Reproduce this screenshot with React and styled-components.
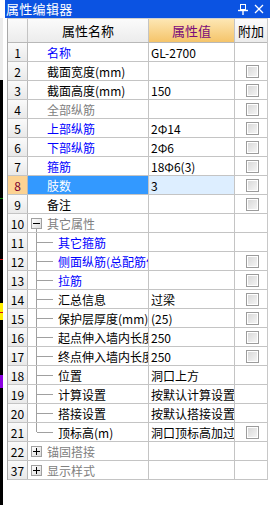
import React from "react";
import styled, { createGlobalStyle, css } from "styled-components";

const GlobalStyle = createGlobalStyle`
  html, body {
    margin: 0;
    padding: 0;
    background: #fff;
  }
  * {
    box-sizing: border-box;
  }
`;

const FONT = `"Noto Sans CJK SC", "Liberation Sans", sans-serif`;

const Page = styled.div`
  display: flex;
  width: 270px;
  height: 505px;
  overflow: hidden;
  font-family: ${FONT};
  font-size: 12px;
`;

// the app behind the docked panel shows through on the left
const BackStrip = styled.div`
  width: 3px;
  flex: none;
  background: linear-gradient(
    to bottom,
    #fff 0 18px,
    #ececec 18px 80px,
    #000 80px 198px,
    #0a8a0a 198px 199px,
    #000 199px 259px,
    #d01010 259px 260px,
    #000 260px 303px,
    #ffee00 303px 312px,
    #d01010 312px 313px,
    #ffee00 313px 320px,
    #000 320px 375px,
    #8a00e0 375px 388px,
    #000 388px
  );
`;

const Panel = styled.div`
  flex: 1;
  display: flex;
  flex-direction: column;
  background: #fff;
`;

const TitleBar = styled.div`
  height: 18px;
  margin-left: 2px;
  display: flex;
  align-items: center;
  background: #0b53e2;
  color: #fff;
  padding-left: 1px;
  padding-right: 6px;
`;

const Title = styled.span`
  flex: 1;
  font-size: 13px;
  line-height: 18px;
  letter-spacing: 0.3px;
`;

const TitleButton = styled.span`
  width: 11px;
  height: 11px;
  margin-left: 5px;
  display: flex;
  align-items: center;
  justify-content: center;
`;

const Grid = styled.div`
  margin-left: 4px;
  width: 261px;
  border-left: 1px solid #a8a8a8;
  border-right: 1px solid #c8c8c8;
  border-top: 1px solid #d0d0d0;
`;

const Row = styled.div`
  display: grid;
  grid-template-columns: 20px 121px 86px 32px;
  height: ${(p) => (p.$header ? 24 : 19)}px;
  border-bottom: 1px solid ${(p) => (p.$header ? "#b8b8b8" : "#c4c4c4")};
`;

const HeadCell = styled.div`
  display: flex;
  align-items: center;
  justify-content: center;
  border-right: 1px solid #c4c4c4;
  background: linear-gradient(to bottom, #fbfbfb, #ececec);
  color: #000;
  font-size: 13px;
  white-space: nowrap;
  overflow: hidden;
  ${(p) =>
    p.$accent &&
    css`
      background: linear-gradient(to bottom, #fde7b4, #f5c46a);
      color: #7a0a7a;
    `}
  &:last-child {
    border-right: none;
  }
`;

const NumCell = styled.div`
  display: flex;
  align-items: center;
  justify-content: center;
  border-right: 1px solid #b8b8b8;
  background: ${(p) =>
    p.$active
      ? "#fcd393"
      : "linear-gradient(to bottom, #fafafa, #e9e9e9)"};
  color: ${(p) => (p.$active ? "#7a0030" : "#000")};
  font-size: 12px;
`;

const NameCell = styled.div`
  display: flex;
  align-items: center;
  min-width: 0;
  border-right: 1px solid #c4c4c4;
  padding-left: ${(p) => (p.$child ? 0 : p.$group ? 3 : 19)}px;
  overflow: hidden;
  background: ${(p) => (p.$selected ? "#3399ff" : "transparent")};
  color: ${(p) =>
    p.$selected
      ? "#fff"
      : p.$tone === "blue"
      ? "#0000ff"
      : p.$tone === "gray"
      ? "#808080"
      : "#000"};
`;

const Label = styled.span`
  flex: 1;
  min-width: 0;
  white-space: nowrap;
  overflow: hidden;
  text-overflow: clip;
`;

const ValueCell = styled.div`
  display: flex;
  align-items: center;
  min-width: 0;
  border-right: 1px solid #c4c4c4;
  padding-left: 2px;
  overflow: hidden;
  background: ${(p) => (p.$selected ? "#ddeeff" : "transparent")};
  color: #000;
`;

const ExtraCell = styled.div`
  display: flex;
  align-items: center;
  justify-content: center;
  padding-left: 2px;
`;

const Check = styled.span`
  display: block;
  width: 13px;
  height: 13px;
  border: 1px solid #9c9c9c;
  box-shadow: inset 0 0 0 1px #fff;
  background: linear-gradient(135deg, #d6d6d6, #f7f7f7);
`;

const Expander = styled.span`
  position: relative;
  width: 11px;
  height: 11px;
  flex: none;
  margin-right: 5px;
  border: 1px solid #a0a0a0;
  background: linear-gradient(135deg, #ffffff, #dcdcdc);
  display: flex;
  align-items: center;
  justify-content: center;
  ${(p) =>
    p.$withLine &&
    css`
      &::after {
        content: "";
        position: absolute;
        left: 4px;
        top: 10px;
        height: 9px;
        border-left: 1px solid #a0a0a0;
      }
    `}
`;

const Connector = styled.span`
  position: relative;
  width: 30px;
  align-self: stretch;
  flex: none;
  &::before {
    content: "";
    position: absolute;
    left: 8px;
    top: 0;
    height: ${(p) => (p.$last ? "50%" : "100%")};
    border-left: 1px solid #a0a0a0;
  }
  &::after {
    content: "";
    position: absolute;
    left: 9px;
    top: 50%;
    width: 16px;
    border-top: 1px solid #a0a0a0;
  }
`;

const rows = [
  { n: 1, name: "名称", tone: "blue", value: "GL-2700" },
  { n: 2, name: "截面宽度(mm)", tone: "black", value: "", check: true },
  { n: 3, name: "截面高度(mm)", tone: "black", value: "150", check: true },
  { n: 4, name: "全部纵筋", tone: "gray", value: "", check: true },
  { n: 5, name: "上部纵筋", tone: "blue", value: "2Φ14", check: true },
  { n: 6, name: "下部纵筋", tone: "blue", value: "2Φ6", check: true },
  { n: 7, name: "箍筋", tone: "blue", value: "18Φ6(3)", check: true },
  { n: 8, name: "肢数", value: "3", check: true, selected: true },
  { n: 9, name: "备注", tone: "black", value: "", check: true },
  { n: 10, name: "其它属性", tone: "gray", group: "open" },
  { n: 11, name: "其它箍筋", tone: "blue", child: true },
  { n: 12, name: "侧面纵筋(总配筋值)", tone: "blue", child: true, check: true },
  { n: 13, name: "拉筋", tone: "blue", child: true, check: true },
  { n: 14, name: "汇总信息", tone: "black", child: true, value: "过梁", check: true },
  { n: 15, name: "保护层厚度(mm)", tone: "black", child: true, value: "(25)", check: true },
  { n: 16, name: "起点伸入墙内长度(mm)", tone: "black", child: true, value: "250", check: true },
  { n: 17, name: "终点伸入墙内长度(mm)", tone: "black", child: true, value: "250", check: true },
  { n: 18, name: "位置", tone: "black", child: true, value: "洞口上方" },
  { n: 19, name: "计算设置", tone: "black", child: true, value: "按默认计算设置" },
  { n: 20, name: "搭接设置", tone: "black", child: true, value: "按默认搭接设置" },
  { n: 21, name: "顶标高(m)", tone: "black", child: true, last: true, value: "洞口顶标高加过梁高度", check: true },
  { n: 22, name: "锚固搭接", tone: "gray", group: "closed" },
  { n: 37, name: "显示样式", tone: "gray", group: "closed" },
];

const PinIcon = () => (
  <svg width="10" height="11" viewBox="0 0 10 11" fill="none" stroke="#fff" strokeWidth="1">
    <rect x="2.5" y="0.5" width="5" height="5" />
    <line x1="0" y1="6.5" x2="10" y2="6.5" strokeWidth="1.4" />
    <line x1="5" y1="6.5" x2="5" y2="11" strokeWidth="1.4" />
  </svg>
);

const CloseIcon = () => (
  <svg width="10" height="10" viewBox="0 0 10 10" stroke="#fff" strokeWidth="1.2">
    <line x1="1" y1="1" x2="9" y2="9" />
    <line x1="9" y1="1" x2="1" y2="9" />
  </svg>
);

const Sign = ({ open }) => (
  <svg width="9" height="9" viewBox="0 0 9 9" stroke="#000" strokeWidth="1">
    <line x1="1" y1="4.5" x2="8" y2="4.5" />
    {!open && <line x1="4.5" y1="1" x2="4.5" y2="8" />}
  </svg>
);

const PropertyRow = ({ row }) => (
  <Row>
    <NumCell $active={row.selected}>{row.n}</NumCell>
    <NameCell
      $tone={row.tone}
      $selected={row.selected}
      $child={row.child}
      $group={!!row.group}
    >
      {row.child && <Connector $last={row.last} />}
      {row.group && (
        <Expander $withLine={row.group === "open"}>
          <Sign open={row.group === "open"} />
        </Expander>
      )}
      <Label>{row.name}</Label>
    </NameCell>
    <ValueCell $selected={row.selected}>
      <Label>{row.value}</Label>
    </ValueCell>
    <ExtraCell>{row.check && <Check />}</ExtraCell>
  </Row>
);

export default function App() {
  return (
    <>
      <GlobalStyle />
      <Page>
        <BackStrip />
        <Panel>
          <TitleBar>
            <Title>属性编辑器</Title>
            <TitleButton>
              <PinIcon />
            </TitleButton>
            <TitleButton>
              <CloseIcon />
            </TitleButton>
          </TitleBar>
          <Grid>
            <Row $header>
              <HeadCell />
              <HeadCell>属性名称</HeadCell>
              <HeadCell $accent>属性值</HeadCell>
              <HeadCell>附加</HeadCell>
            </Row>
            {rows.map((row) => (
              <PropertyRow key={row.n} row={row} />
            ))}
          </Grid>
        </Panel>
      </Page>
    </>
  );
}
